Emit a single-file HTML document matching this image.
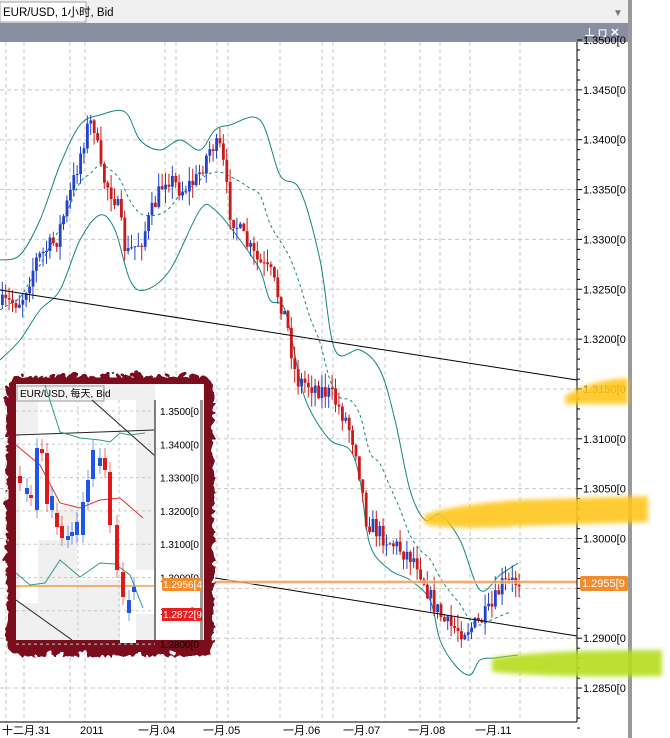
<!DOCTYPE html>
<html><head><meta charset="utf-8"><style>
body{margin:0;width:670px;height:738px;overflow:hidden;background:#fff;font-family:"Liberation Sans","Noto Sans CJK SC",sans-serif}
</style></head><body>
<svg id="s" width="670" height="738" xmlns="http://www.w3.org/2000/svg" style="position:absolute;left:0;top:0;font-family:'Liberation Sans','Noto Sans CJK SC',sans-serif">
<defs>
<filter id="bl" x="-20%" y="-50%" width="140%" height="200%"><feGaussianBlur stdDeviation="2.5"/></filter>
<filter id="rough" x="-10%" y="-10%" width="120%" height="120%"><feTurbulence baseFrequency="0.09" numOctaves="2" seed="3"/><feDisplacementMap in="SourceGraphic" scale="10"/></filter>
</defs>
<rect x="0" y="0" width="670" height="23" fill="#f0f0f0"/>
<rect x="0" y="2" width="86" height="20" fill="#fff" stroke="#a0a0a0"/>
<text x="3" y="16" font-size="11.5" fill="#000">EUR/USD, 1小时, Bid</text>
<text x="613" y="16" font-size="10" fill="#777">▼</text>
<rect x="0" y="23" width="628" height="19" fill="#878fa1"/>
<text x="584" y="36" font-size="11" fill="#fff" font-weight="bold">⊥ ◻ ✕</text>
<rect x="628" y="0" width="4" height="738" fill="#999"/>
<rect x="632" y="0" width="38" height="738" fill="#fff"/>
<g id="grid"></g>
<g id="bands"></g>
<g id="candles"></g>
<line x1="0" y1="290" x2="577" y2="380" stroke="#000" stroke-width="1"/>
<line x1="215" y1="578" x2="577" y2="636" stroke="#000" stroke-width="1"/>
<rect x="215" y="580" width="362" height="4" fill="#fbd6b5" opacity="0.7"/>
<line x1="215" y1="582" x2="577" y2="582" stroke="#e07b20" stroke-width="1"/>
<line x1="577" y1="42" x2="577" y2="722" stroke="#000"/>
<line x1="0" y1="722" x2="577" y2="722" stroke="#000"/>
<g id="axis" font-size="11" fill="#000"></g>
<rect x="580" y="576" width="48" height="15" rx="2" fill="#f28b2c"/>
<text x="582" y="587" font-size="11" fill="#fff">1.2955[9</text>
<g filter="url(#bl)" opacity="0.9">
<path d="M565 396 Q590 380 628 378 L628 404 Q590 404 565 404Z" fill="#ffc61a"/>
<path d="M424 515 Q450 505 520 500 L648 496 L648 522 L520 526 Q450 530 424 524Z" fill="#ffc61a"/>
<path d="M492 658 Q540 650 662 650 L662 676 Q560 678 492 672Z" fill="#b5dd1e"/>
</g>
<g id="times" font-size="11" fill="#000"></g>
<!-- inset -->
<rect x="4" y="373" width="207" height="280" fill="#7c0b1f" filter="url(#rough)" rx="14"/>
<rect x="16" y="384" width="188" height="256" fill="#f0f0f0"/>
<rect x="20" y="433" width="18" height="170" fill="#fff"/>
<rect x="38" y="400" width="22" height="140" fill="#fff"/>
<rect x="60" y="400" width="17" height="105" fill="#fff"/>
<rect x="77" y="400" width="43" height="180" fill="#fff"/>
<rect x="120" y="400" width="16" height="243" fill="#fff"/>
<rect x="136" y="570" width="20" height="44" fill="#fff"/>
<rect x="17" y="386" width="87" height="15" fill="#f4f4f4" stroke="#999"/>
<text x="20" y="397" font-size="10" fill="#000">EUR/USD, 每天, Bid</text>
<g id="inset"></g>
<rect x="155" y="384" width="48" height="256" fill="#fff"/>
<line x1="155" y1="400" x2="155" y2="640" stroke="#000"/>
<rect x="200" y="400" width="3" height="240" fill="#999"/>
<g id="iaxis" font-size="10" fill="#000"></g>
<rect x="162" y="578" width="40" height="13" rx="2" fill="#f28b2c"/>
<text x="163" y="588" font-size="10" fill="#fff">1.2956[4</text>
<rect x="162" y="608" width="40" height="13" fill="#e82020"/>
<text x="163" y="618" font-size="10" fill="#fff">1.2872[9</text>
</svg>
<script>
const NS="http://www.w3.org/2000/svg";
function el(p,t,a,txt){const e=document.createElementNS(NS,t);for(const k in a)e.setAttribute(k,a[k]);if(txt)e.textContent=txt;document.getElementById(p).appendChild(e);return e;}
[6,24,70,85,165,176,217,228,280,322,333,385,420,440,470,520].forEach(x=>el('grid','line',{x1:x,y1:42,x2:x,y2:722,stroke:'#c8c8c8','stroke-dasharray':'4,3'}));
const labs=["1.3500","1.3450","1.3400","1.3350","1.3300","1.3250","1.3200","1.3150","1.3100","1.3050","1.3000","1.2950","1.2900","1.2850"];
labs.forEach((l,i)=>{const y=40+i*49.85;if(i>0)el('grid','line',{x1:0,y1:y,x2:577,y2:y,stroke:'#c8c8c8','stroke-dasharray':'4,3'});
el('axis','line',{x1:577,y1:y,x2:582,y2:y,stroke:'#000'});for(let k=1;k<5;k++)el('axis','line',{x1:577,y1:y+k*10,x2:580,y2:y+k*10,stroke:'#000'});
if(i!=11)el('axis','text',{x:583,y:y+4},l+"[0");});
[[2,"十二月.31"],[80,"2011"],[138,"一月.04"],[203,"一月.05"],[283,"一月.06"],[343,"一月.07"],[408,"一月.08"],[475,"一月.11"]].forEach(t=>el('times','text',{x:t[0],y:734},t[1]));
function interp(pts,x){for(let i=1;i<pts.length;i++)if(x<=pts[i][0]){const a=pts[i-1],b=pts[i];return a[1]+(b[1]-a[1])*(x-a[0])/(b[0]-a[0]);}return pts[pts.length-1][1];}
function smooth(pts){let d="M"+pts[0][0]+" "+pts[0][1];for(let i=0;i<pts.length-1;i++){const p0=pts[i-1]||pts[i],p1=pts[i],p2=pts[i+1],p3=pts[i+2]||p2;
d+=" C"+(p1[0]+(p2[0]-p0[0])/6)+" "+(p1[1]+(p2[1]-p0[1])/6)+" "+(p2[0]-(p3[0]-p1[0])/6)+" "+(p2[1]-(p3[1]-p1[1])/6)+" "+p2[0]+" "+p2[1];}return d;}
const up=[[0,260],[20,255],[40,220],[60,165],[80,125],[100,115],[125,112],[140,140],[160,150],[180,140],[200,150],[215,130],[230,125],[260,120],[280,175],[300,190],[320,260],[335,350],[360,350],[380,370],[395,420],[410,490],[425,520],[440,515],[460,540],[480,590],[500,575],[518,563]];
const lo=[[0,360],[20,340],[40,310],[60,290],[80,240],[100,215],[115,230],[130,280],[145,290],[170,270],[200,210],[215,210],[240,240],[260,270],[270,300],[285,310],[300,380],[310,410],[330,440],[350,450],[360,480],[370,545],[390,570],[410,580],[430,600],[440,640],[455,665],[470,675],[480,660],[495,658],[510,656],[518,655]];
el('bands','path',{d:smooth(up),fill:'none',stroke:'#138585','stroke-width':1});
el('bands','path',{d:smooth(lo),fill:'none',stroke:'#138585','stroke-width':1});
const mid=[];for(let x=0;x<=518;x+=10)mid.push([x,(interp(up,x)+interp(lo,x))/2]);
el('bands','path',{d:smooth(mid),fill:'none',stroke:'#138585','stroke-dasharray':'3,3'});
const pc=[[0,305],[20,300],[35,260],[55,240],[70,190],[85,130],[92,120],[100,175],[115,200],[125,255],[140,240],[155,200],[165,175],[180,190],[195,180],[210,145],[220,150],[228,210],[240,235],[255,260],[270,275],[285,320],[295,380],[310,385],[330,395],[345,420],[355,450],[365,520],[380,535],[400,550],[415,560],[430,600],[445,625],[460,630],[475,625],[490,610],[500,585],[510,583],[518,580]];
let seed=7;function r(){seed=(seed*16807)%2147483647;return seed/2147483647;}
let prev=interp(pc,0);
for(let x=1;x<=518;x+=3.4){const c=interp(pc,x)+(r()-0.5)*20,o=prev;prev=c;const hi=Math.min(o,c)-r()*14,lw=Math.max(o,c)+r()*14;
const col=c<o?'#2244cc':'#cc1a1a';el('candles','line',{x1:x+1.3,y1:hi,x2:x+1.3,y2:lw,stroke:col});
el('candles','rect',{x:x,y:Math.min(o,c),width:2.8,height:Math.max(1,Math.abs(c-o)),fill:col});}
["1.3500","1.3400","1.3300","1.3200","1.3100","1.3000","1.2900","1.2800"].forEach((l,i)=>{const y=411+i*33.3;el('inset','line',{x1:16,y1:y,x2:155,y2:y,stroke:'#c8c8c8','stroke-dasharray':'3,3'});el('iaxis','text',{x:160,y:y+4},l+"[0");});
[[78,400,78,640],[119,400,119,640]].forEach(a=>el('inset','line',{x1:a[0],y1:a[1],x2:a[2],y2:a[3],stroke:'#c8c8c8','stroke-dasharray':'3,3'}));
el('inset','line',{x1:16,y1:435,x2:154,y2:430,stroke:'#222'});
el('inset','line',{x1:92,y1:400,x2:154,y2:455,stroke:'#222'});
el('inset','line',{x1:16,y1:600,x2:72,y2:640,stroke:'#222'});
el('inset','line',{x1:16,y1:586,x2:154,y2:586,stroke:'#f08a24','stroke-width':1.2});
el('inset','path',{d:"M16 573 L30 585 L45 583 L60 560 L80 577 L100 563 L115 564 L130 575 L143 608",fill:'none',stroke:'#2a9a8a'});
el('inset','path',{d:"M16 445 L40 465 L60 503 L80 508 L100 500 L120 498 L143 518",fill:'none',stroke:'#e03030'});
el('inset','path',{d:"M45 385 L60 432 L80 438 L100 440 L110 442 L120 433 L130 435 L145 433",fill:'none',stroke:'#2a9a8a'});
const ic=[[18,476,483,'r'],[25,488,494,'b'],[29,495,498,'r'],[35,448,510,'b'],[40,449,453,'r'],[45,453,504,'r'],[50,496,510,'b'],[55,513,527,'r'],[60,526,538,'r'],[66,536,540,'b'],[70,532,536,'b'],[75,522,535,'b'],[81,502,535,'b'],[86,480,502,'b'],[91,450,479,'b'],[98,458,466,'b'],[103,458,470,'r'],[108,472,525,'r'],[115,525,570,'r'],[121,572,597,'r'],[127,600,613,'b'],[132,587,592,'b']];
ic.forEach(c=>{const col=c[3]=='b'?'#1f55e8':'#e01818';el('inset','line',{x1:c[0]+2,y1:c[1]-10,x2:c[0]+2,y2:c[2]+8,stroke:col,opacity:.6});el('inset','rect',{x:c[0],y:c[1],width:4,height:c[2]-c[1],fill:col});});
</script>
</body></html>
